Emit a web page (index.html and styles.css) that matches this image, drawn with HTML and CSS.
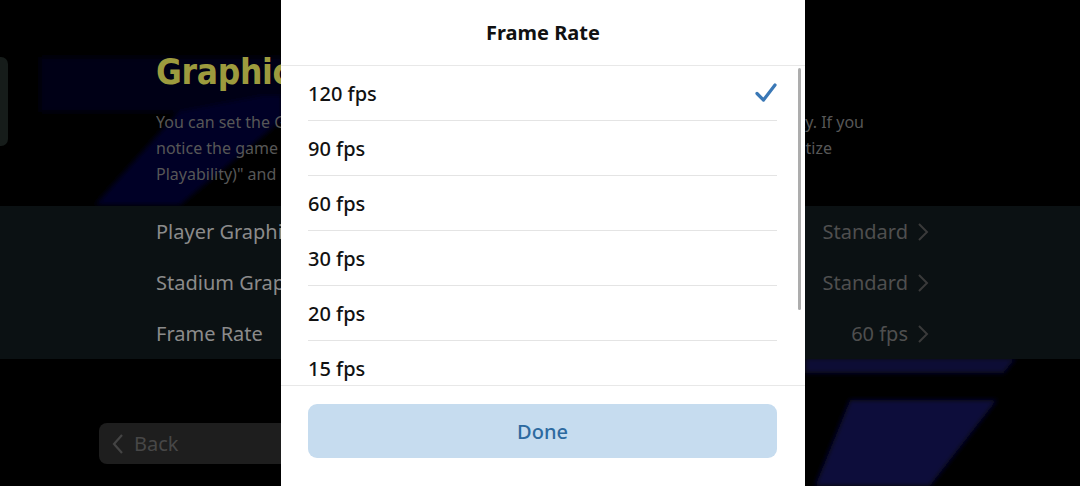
FILE: index.html
```html
<!DOCTYPE html>
<html lang="en">
<head>
<meta charset="utf-8">
<title>Frame Rate</title>
<link rel="stylesheet" href="styles.css">
</head>
<body>
<div class="screen">
  <svg class="decor" width="1080" height="486" viewBox="0 0 1080 486" aria-hidden="true">
    <defs>
      <filter id="soft" x="-10%" y="-10%" width="120%" height="120%"><feGaussianBlur stdDeviation="2.5"/></filter>
    </defs>
    <g filter="url(#soft)">
      <polygon points="40,57 282,57 282,112 40,112" fill="#030314"/>
      <polygon points="178,112 262,96 282,96 282,120 180,205 95,205" fill="#060628"/>
      <polygon points="805,358 1016,358 1004,373 805,373" fill="#070734"/>
      <polygon points="850,400 997,400 930,486 815,486" fill="#08083a"/>
    </g>
    <rect x="-10" y="57" width="18" height="89" rx="7" fill="#161c1a"/>
  </svg>

  <main class="page">
    <h1 class="title">Graphics</h1>
    <div class="desc">
      <div class="line"><span class="clip-l">You can set the Gr</span><span class="clip-r r1"><span>ity. If you</span></span></div>
      <div class="line"><span class="clip-l">notice the game is</span><span class="clip-r r2"><span>ritize</span></span></div>
      <div class="line"><span class="clip-l">Playability)" and</span></div>
    </div>

    <section class="band">
      <div class="row"><span class="label">Player Graphics</span><span class="value">Standard<svg class="chev" width="12" height="20" viewBox="0 0 12 20"><path d="M2 2 L10 10 L2 18" fill="none" stroke="#3a3a3a" stroke-width="2"/></svg></span></div>
      <div class="row"><span class="label">Stadium Graphics</span><span class="value">Standard<svg class="chev" width="12" height="20" viewBox="0 0 12 20"><path d="M2 2 L10 10 L2 18" fill="none" stroke="#3a3a3a" stroke-width="2"/></svg></span></div>
      <div class="row"><span class="label">Frame Rate</span><span class="value">60 fps<svg class="chev" width="12" height="20" viewBox="0 0 12 20"><path d="M2 2 L10 10 L2 18" fill="none" stroke="#3a3a3a" stroke-width="2"/></svg></span></div>
    </section>

    <div class="back">
      <svg width="14" height="22" viewBox="0 0 14 22"><path d="M11 2 L3 11 L11 20" fill="none" stroke="#444" stroke-width="2.2"/></svg>
      <span>Back</span>
    </div>
  </main>

  <div class="modal">
    <div class="modal-head">Frame Rate</div>
    <div class="list">
      <div class="opt"><span>120 fps</span><svg width="22" height="20" viewBox="0 0 22 20"><path d="M2 10.5 L8.5 17 L20 2" fill="none" stroke="#3a78b6" stroke-width="3.2" stroke-linecap="round" stroke-linejoin="round"/></svg></div>
      <div class="opt"><span>90 fps</span></div>
      <div class="opt"><span>60 fps</span></div>
      <div class="opt"><span>30 fps</span></div>
      <div class="opt"><span>20 fps</span></div>
      <div class="opt"><span>15 fps</span></div>
      <div class="scrollbar"></div>
    </div>
    <div class="modal-foot">
      <div class="done">Done</div>
    </div>
  </div>
</div>
</body>
</html>
```

FILE: styles.css
```css
* { box-sizing: border-box; }
html, body { margin: 0; padding: 0; }
body {
  background: #000;
  font-family: "Noto Sans", "DejaVu Sans", sans-serif;
  width: 1080px;
  height: 486px;
  overflow: hidden;
}
.screen {
  position: relative;
  width: 1080px;
  height: 486px;
  overflow: hidden;
  background: #000;
}
.decor {
  position: absolute;
  left: 0;
  top: 0;
  z-index: 0;
}
.page {
  position: relative;
  z-index: 1;
  display: flex;
  flex-direction: column;
}
.title {
  margin: 52px 0 0 156px;
  width: 125px;
  overflow: hidden;
  white-space: nowrap;
  font-family: "DejaVu Sans Condensed", "DejaVu Sans", sans-serif;
  font-weight: bold;
  font-size: 35px;
  line-height: 40px;
  color: #9d9b3e;
  letter-spacing: -0.3px;
}
.desc {
  margin: 17px 0 0 156px;
  font-size: 16px;
  line-height: 26px;
  color: #575757;
}
.line {
  display: flex;
  white-space: nowrap;
  height: 26px;
}
.clip-l {
  display: block;
  width: 125px;
  overflow: hidden;
}
.clip-r {
  display: flex;
  justify-content: flex-end;
  overflow: hidden;
  margin-left: 524px;
}
.r1 { width: 59px; }
.r2 { width: 27px; }
.band {
  margin-top: 19px;
  background: #0b1113;
  display: flex;
  flex-direction: column;
}
.row {
  height: 51px;
  display: flex;
  align-items: center;
  justify-content: space-between;
  padding: 0 151px 0 156px;
  font-size: 20px;
}
.label {
  color: #8b8b8b;
  width: 125px;
  overflow: hidden;
  white-space: nowrap;
}
.value {
  color: #4f4f4f;
  display: flex;
  align-items: center;
  gap: 9px;
}
.chev { display: block; }
.back {
  margin: 64px 0 0 99px;
  width: 182px;
  height: 41px;
  border-radius: 8px 0 0 8px;
  background: #1e1e1e;
  display: flex;
  align-items: center;
  gap: 9px;
  padding-left: 12px;
  font-size: 20px;
  color: #474747;
}
.back svg { display: block; }

/* modal */
.modal {
  position: absolute;
  z-index: 5;
  left: 281px;
  top: 0;
  width: 524px;
  height: 486px;
  background: #fff;
  display: flex;
  flex-direction: column;
}
.modal-head {
  height: 66px;
  border-bottom: 1px solid #e8e8e8;
  display: flex;
  align-items: center;
  justify-content: center;
  font-weight: bold;
  font-size: 20px;
  color: #111;
}
.list {
  position: relative;
  height: 320px;
  overflow: hidden;
  border-bottom: 1px solid #e8e8e8;
  padding: 0 28px 0 27px;
}
.opt {
  height: 55px;
  border-bottom: 1px solid #e4e4e4;
  display: flex;
  align-items: center;
  justify-content: space-between;
  font-size: 20px;
  font-weight: 500;
  color: #111;
}
.opt svg { display: block; }
.scrollbar {
  position: absolute;
  right: 4px;
  top: 2px;
  width: 3px;
  height: 242px;
  border-radius: 2px;
  background: #adadad;
}
.modal-foot {
  padding: 18px 28px 0 27px;
}
.done {
  height: 54px;
  border-radius: 9px;
  background: #c6dcef;
  display: flex;
  align-items: center;
  justify-content: center;
  font-size: 20px;
  font-weight: 500;
  color: #2d6aa0;
}
```
